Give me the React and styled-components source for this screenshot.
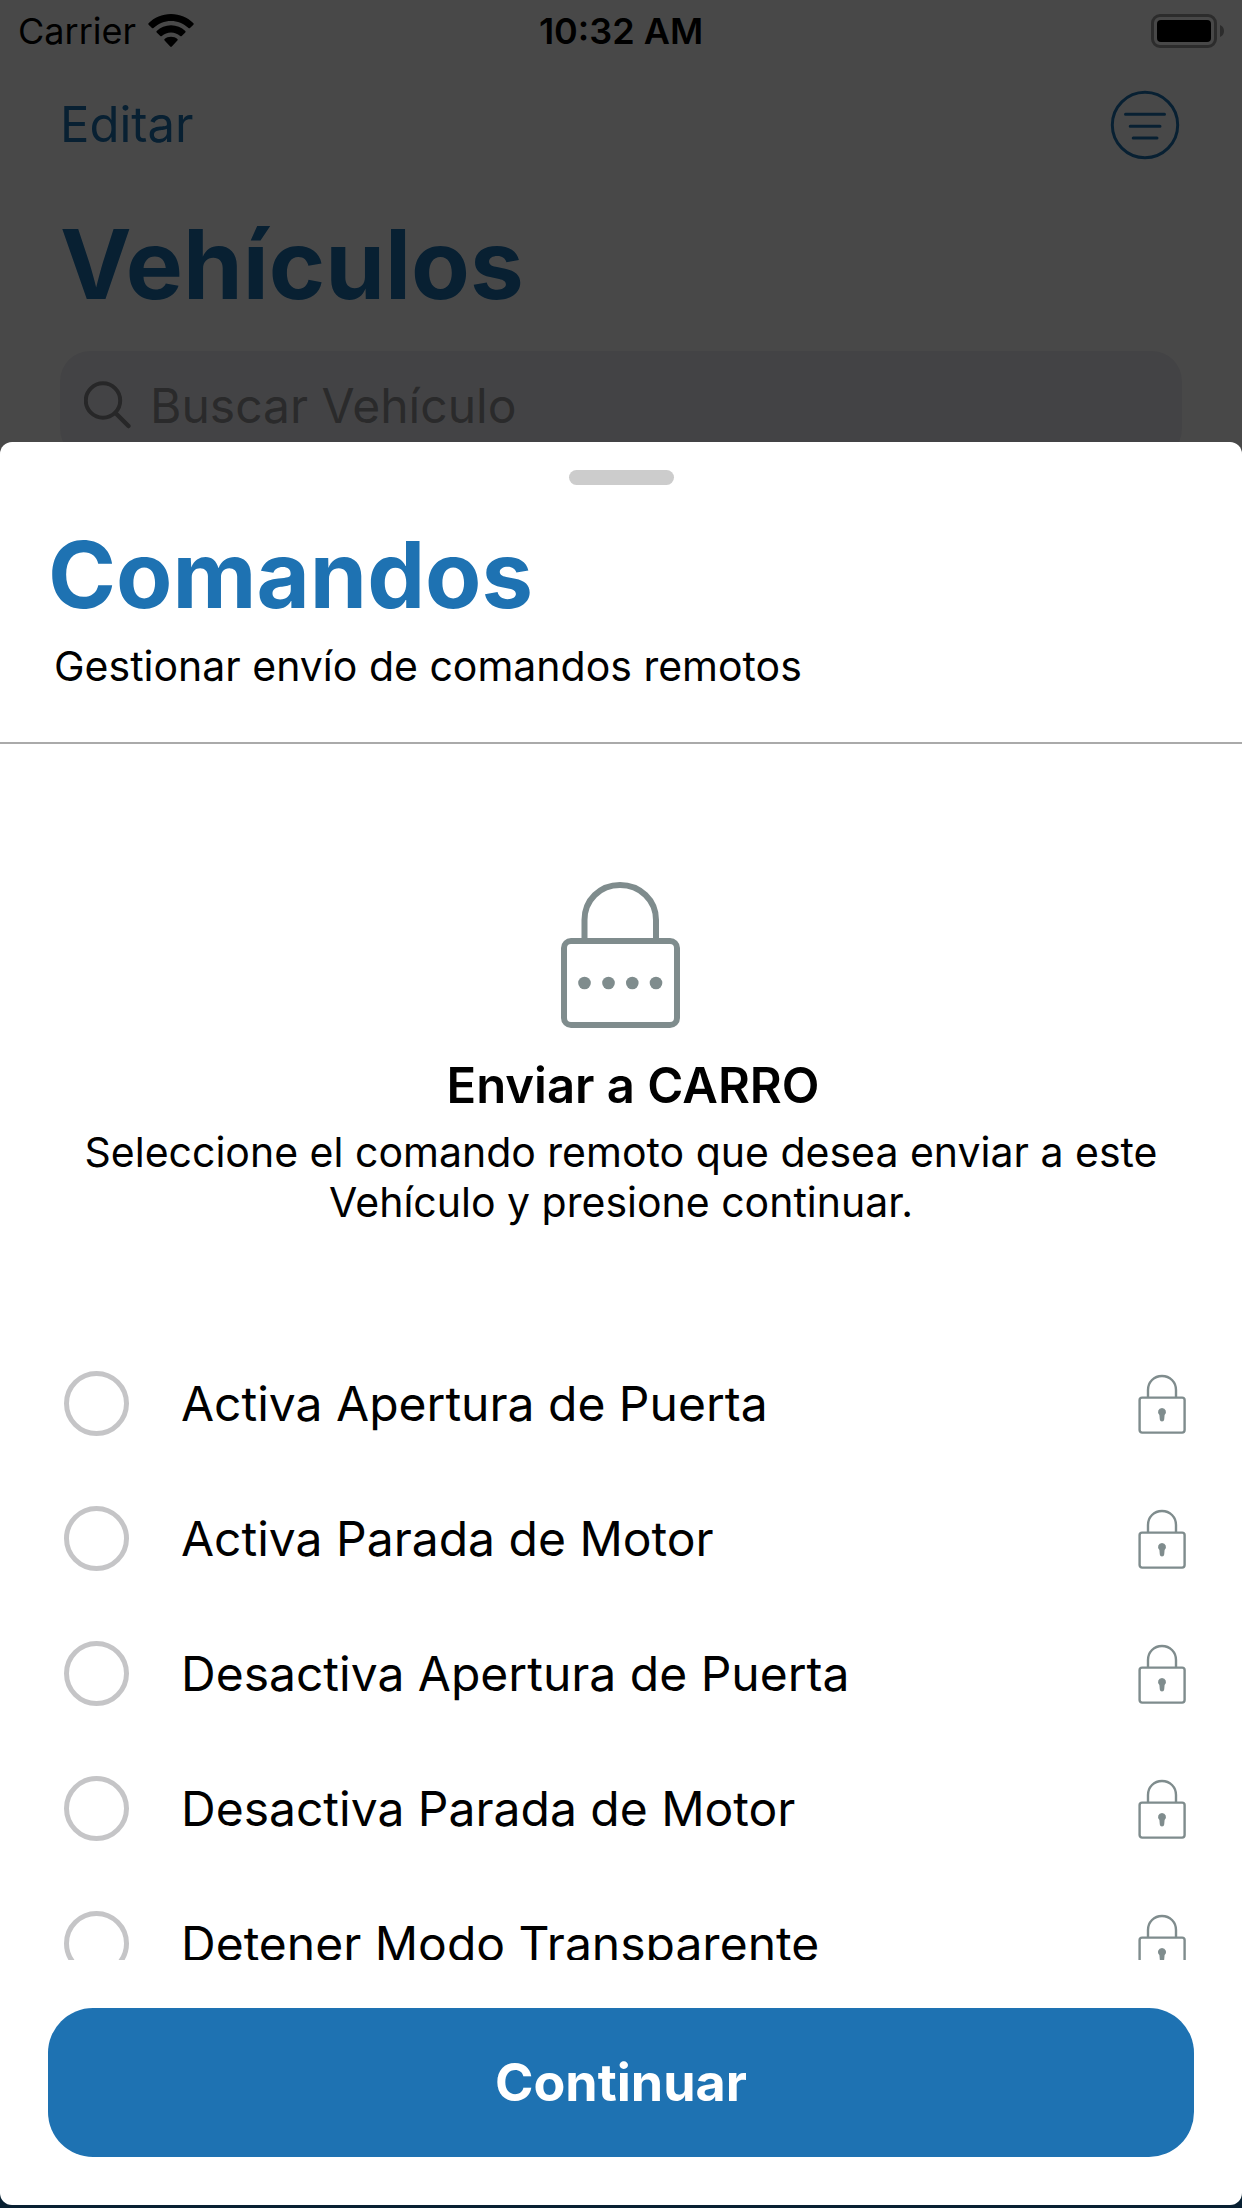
import React, { useState } from "react";
import styled, { createGlobalStyle } from "styled-components";

const BLUE = "#1e72b2";

const GlobalStyle = createGlobalStyle`
  * {
    box-sizing: border-box;
  }
  body {
    margin: 0;
    background-color: white;
    color: black;
    font-family: Inter, "Liberation Sans", sans-serif;
  }
  h1, h2, h3, p, ul, fieldset {
    margin: 0;
    padding: 0;
    border: 0;
  }
  button, input {
    font-family: inherit;
  }
`;

const Screen = styled.div`
  position: relative;
  display: flex;
  flex-direction: column;
  height: 100vh;
  overflow: hidden;
`;

const StatusBar = styled.header`
  display: grid;
  grid-template-columns: 1fr auto 1fr;
  align-items: center;
  height: 60px;
  padding: 2px 18px 0;
  font-size: 36px;
  line-height: 40px;
`;

const Carrier = styled.div`
  display: flex;
  align-items: center;
  gap: 12px;
`;

const Clock = styled.time`
  font-weight: 600;
`;

const BatterySlot = styled.div`
  display: flex;
  justify-content: flex-end;
`;

const NavBar = styled.nav`
  display: flex;
  align-items: center;
  justify-content: space-between;
  height: 130px;
  padding: 0 62px 0 60px;
`;

const NavButton = styled.button`
  display: flex;
  padding: 0;
  border: 0;
  background: none;
  color: ${BLUE};
  font-size: 49px;
  line-height: 60px;
`;

const Title = styled.h1`
  color: ${BLUE};
  font-size: ${props => (props.$large ? "96px" : "92px")};
  font-weight: 700;
  line-height: 120px;
`;

const Content = styled.main`
  flex: 1;
  padding: 14px 60px 0;
`;

const SearchBox = styled.label`
  display: flex;
  align-items: center;
  gap: 16px;
  height: 108px;
  margin-top: 27px;
  padding: 2px 24px 0;
  border-radius: 30px;
  background-color: #eeeef3;
`;

const SearchInput = styled.input`
  flex: 1;
  min-width: 0;
  padding: 0;
  border: 0;
  background: none;
  color: black;
  font-size: 48px;
  line-height: 60px;
  &::placeholder {
    color: #959597;
    opacity: 1;
  }
`;

const TabBar = styled.footer`
  height: 147px;
  background-color: ${BLUE};
`;

const Overlay = styled.div`
  position: absolute;
  inset: 0;
  display: flex;
  padding: 442px 0 3px;
  background-color: rgba(0, 0, 0, 0.718);
`;

const Sheet = styled.form`
  flex: 1;
  min-width: 0;
  display: flex;
  flex-direction: column;
  border-radius: 12px;
  background-color: white;
`;

const Handle = styled.div`
  flex-shrink: 0;
  align-self: center;
  width: 105px;
  height: 15px;
  margin-top: 28px;
  border-radius: 8px;
  background-color: #cccccc;
`;

const SheetHeader = styled.div`
  padding: 30px 48px 51px;
  border-bottom: 2px solid #aaaaaa;
`;

const Subtitle = styled.p`
  margin-top: 6px;
  padding-left: 6px;
  font-size: 41px;
  line-height: 50px;
`;

const Intro = styled.section`
  display: flex;
  flex-direction: column;
  align-items: center;
  padding: 137px 72px 109px;
  text-align: center;
`;

const IntroTitle = styled.h2`
  margin-top: 24px;
  padding-left: 24px;
  font-size: 49px;
  font-weight: 600;
  line-height: 66px;
`;

const IntroText = styled.p`
  margin-top: 8px;
  font-size: 41px;
  line-height: 50px;
`;

const CommandList = styled.fieldset`
  flex: 1;
  min-width: 0;
  min-height: 0;
  overflow-y: auto;
  scrollbar-width: none;
`;

const Command = styled.label`
  display: flex;
  align-items: center;
  height: 135px;
  padding: 0 56px 0 64px;
  font-size: 48px;
  line-height: 60px;
`;

const CommandName = styled.span`
  flex: 1;
  padding-left: 52px;
`;

const Radio = styled.input`
  appearance: none;
  flex-shrink: 0;
  width: 65px;
  height: 65px;
  margin: 0;
  border: 5px solid #c5c5c7;
  border-radius: 50%;
  &:checked {
    border: 18px solid ${BLUE};
  }
`;

const Actions = styled.div`
  padding: 48px;
`;

const ContinueButton = styled.button`
  display: block;
  width: 100%;
  height: 149px;
  border: 0;
  border-radius: 45px;
  background-color: ${BLUE};
  color: white;
  font-size: 52px;
  font-weight: 700;
`;

const WifiIcon = () => (
  <svg width="46" height="34" viewBox="0 0 46 34" aria-hidden="true">
    <path d="M23 0C32 0 39.500 3.500 45.500 9.200Q46 10 45.400 10.700L42 14Q41.300 14.600 40.500 14C35.500 9.500 29.500 7 23 7S10.500 9.500 5.500 14Q4.700 14.600 4 14L.6 10.700Q0 10 .5 9.200C6.500 3.500 14 0 23 0Z" />
    <path d="M23 11.300C28.500 11.300 33.500 13.500 37.300 17Q38 17.800 37.300 18.500L33.700 22Q33 22.600 32.200 22C29.500 19.700 26.500 18.400 23 18.400S16.500 19.700 13.800 22Q13 22.600 12.300 22L8.700 18.500Q8 17.800 8.700 17C12.500 13.500 17.500 11.300 23 11.300Z" />
    <path d="M23 22.800C25.500 22.800 27.700 23.700 29.400 25Q30.200 25.800 29.400 26.600L23.800 32.600Q23 33.400 22.200 32.600L16.600 26.600Q15.800 25.800 16.600 25C18.300 23.700 20.500 22.800 23 22.800Z" />
  </svg>
);

const BatteryIcon = () => (
  <svg width="73" height="34" viewBox="0 0 73 34" aria-hidden="true">
    <rect x="1.500" y="1.500" width="63" height="31" rx="7.500" fill="none" stroke="#9c9c9c" strokeWidth="3" />
    <rect x="6" y="6" width="54" height="22" rx="4" />
    <path d="M69 11Q73 12.500 73 17T69 23Z" fill="#9c9c9c" />
  </svg>
);

const FilterIcon = () => (
  <svg width="70" height="70" viewBox="0 0 70 70" fill="none" stroke="currentColor" strokeWidth="3" strokeLinecap="round" aria-hidden="true">
    <circle cx="35" cy="35" r="32.700" />
    <path d="M15.500 24.200H54.500M20.200 36.200H50M23.200 48H47" />
  </svg>
);

const SearchIcon = () => (
  <svg width="50" height="50" viewBox="0 1 50 50" fill="none" stroke="#8a8a8d" strokeWidth="4" strokeLinecap="round" aria-hidden="true">
    <circle cx="19" cy="20.500" r="17.200" />
    <path d="M31.500 33L44.500 46" strokeWidth="4.500" />
  </svg>
);

const CodeLockIcon = () => (
  <svg width="120" height="148" viewBox="1 0 120 148" fill="none" stroke="#7f8c8d" strokeWidth="6" aria-hidden="true">
    <path d="M24.500 58V39C24.500 19 40 4 60 4S96 19 96 39V58" />
    <rect x="4" y="60" width="113" height="84" rx="7" />
    <g fill="#7f8c8d" stroke="none">
      <circle cx="24.500" cy="102" r="6.300" />
      <circle cx="48.500" cy="102" r="6.300" />
      <circle cx="72.300" cy="102" r="6.300" />
      <circle cx="96" cy="102" r="6.300" />
    </g>
  </svg>
);

const LockIcon = () => (
  <svg width="48" height="60" viewBox="0 0 48 60" fill="none" stroke="#7f8c8d" strokeWidth="2.400" aria-hidden="true">
    <path d="M10 23V16C10 8 16 2 24 2S38 8 38 16V23" />
    <rect x="1.600" y="23.600" width="45" height="35" rx="2.500" />
    <path d="M24 34A4 4 0 0 1 26.600 41L26.200 45.500Q26 47.500 24 47.500T21.800 45.500L21.400 41A4 4 0 0 1 24 34Z" fill="#7f8c8d" stroke="none" />
  </svg>
);

const commands = [
  "Activa Apertura de Puerta",
  "Activa Parada de Motor",
  "Desactiva Apertura de Puerta",
  "Desactiva Parada de Motor",
  "Detener Modo Transparente"
];

const App = () => {
  const [selected, setSelected] = useState(null);

  return (
    <Screen>
      <GlobalStyle />
      <StatusBar>
        <Carrier>
          Carrier
          <WifiIcon />
        </Carrier>
        <Clock>10:32 AM</Clock>
        <BatterySlot>
          <BatteryIcon />
        </BatterySlot>
      </StatusBar>
      <NavBar>
        <NavButton type="button">Editar</NavButton>
        <NavButton type="button" aria-label="Filtrar">
          <FilterIcon />
        </NavButton>
      </NavBar>
      <Content>
        <Title $large>Vehículos</Title>
        <SearchBox>
          <SearchIcon />
          <SearchInput type="search" placeholder="Buscar Vehículo" aria-label="Buscar Vehículo" />
        </SearchBox>
      </Content>
      <TabBar />
      <Overlay>
        <Sheet role="dialog" aria-label="Comandos" onSubmit={e => e.preventDefault()}>
          <Handle />
          <SheetHeader>
            <Title as="h2">Comandos</Title>
            <Subtitle>Gestionar envío de comandos remotos</Subtitle>
          </SheetHeader>
          <Intro>
            <CodeLockIcon />
            <IntroTitle>Enviar a CARRO</IntroTitle>
            <IntroText>
              Seleccione el comando remoto que desea enviar a este Vehículo y presione continuar.
            </IntroText>
          </Intro>
          <CommandList aria-label="Comandos remotos">
            {commands.map(name => (
              <Command key={name}>
                <Radio
                  type="radio"
                  name="command"
                  value={name}
                  checked={selected === name}
                  onChange={() => setSelected(name)}
                />
                <CommandName>{name}</CommandName>
                <LockIcon />
              </Command>
            ))}
          </CommandList>
          <Actions>
            <ContinueButton type="submit">Continuar</ContinueButton>
          </Actions>
        </Sheet>
      </Overlay>
    </Screen>
  );
};

export default App;
